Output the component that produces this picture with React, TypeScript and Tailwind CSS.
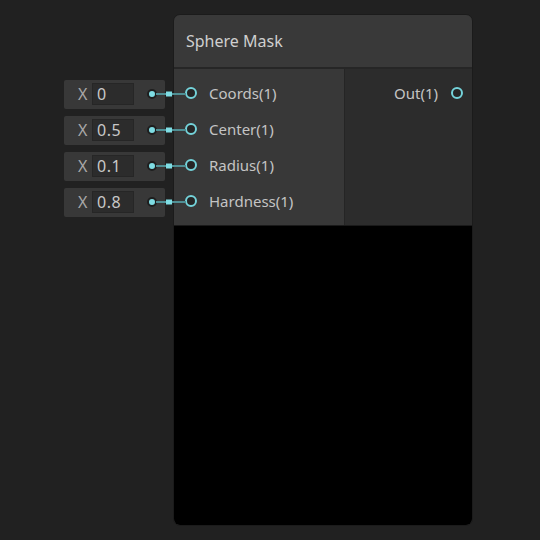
import React from "react";

const inputs = [
  { label: "Coords(1)", value: "0" },
  { label: "Center(1)", value: "0.5" },
  { label: "Radius(1)", value: "0.1" },
  { label: "Hardness(1)", value: "0.8" },
];

const font = { fontFamily: '"Noto Sans", "Open Sans", sans-serif' };

const Port = () => (
  <span className="block w-[12px] h-[12px] rounded-full border-2 border-[#74d3da] bg-[#262626]" />
);

const InlineField = ({ value }: { value: string }) => (
  <div className="flex h-[36px] items-center">
    <div className="flex h-[29px] w-[101px] items-center rounded-[2px] bg-[#383838] pl-[14px]">
      <span className="w-[14px] text-[16px] text-[#a8a8a8]">X</span>
      <div className="flex h-[22px] w-[42px] items-center border border-[#262626] bg-[#2c2c2c] pl-[4px] text-[16px] tracking-[0.5px] text-[#c8c8c8]">
        {value}
      </div>
      <span className="ml-[13px] block h-[10px] w-[10px] rounded-full border-2 border-[#1e1e1e] bg-[#7fdde4]" />
    </div>
  </div>
);

export default function App() {
  return (
    <div
      className="relative flex h-[540px] w-[540px] bg-[#212121] pl-[64px] pt-[14px]"
      style={font}
    >
      <div className="w-[109px] pt-[62px]">
        {inputs.map((i) => (
          <InlineField key={i.label} value={i.value} />
        ))}
      </div>

      <div className="flex h-[512px] w-[300px] flex-col overflow-hidden rounded-[7px] border border-[#1b1b1b] bg-[#393939]">
        <div className="flex h-[54px] items-center border-b-2 border-[#262626] pl-[12px] text-[16px] text-[#cfcfcf]">
          Sphere Mask
        </div>
        <div className="flex h-[156px]">
          <div className="w-[170px] bg-[#383838] pb-[4px] pt-[6px]">
            {inputs.map((i) => (
              <div key={i.label} className="flex h-[36px] items-center gap-[12px] pl-[11px]">
                <Port />
                <span className="text-[15px] text-[#c4c4c4]">{i.label}</span>
              </div>
            ))}
          </div>
          <div className="flex-1 border-l border-[#252525] bg-[#2c2c2c] pt-[6px]">
            <div className="flex h-[36px] items-center justify-end gap-[13px] pr-[9px]">
              <span className="text-[15px] text-[#c4c4c4]">Out(1)</span>
              <Port />
            </div>
          </div>
        </div>
        <div className="flex-1 border-t border-[#1a1a1a] bg-black" />
      </div>

      <svg className="pointer-events-none absolute left-0 top-0" width="540" height="540">
        {[94, 130, 166, 202].map((y) => (
          <g key={y}>
            <line x1="156" y1={y} x2="186" y2={y} stroke="#4f8f94" strokeWidth="2" />
            <rect x="166" y={y - 2.5} width="6" height="5" fill="#7fdde4" />
          </g>
        ))}
      </svg>
    </div>
  );
}
